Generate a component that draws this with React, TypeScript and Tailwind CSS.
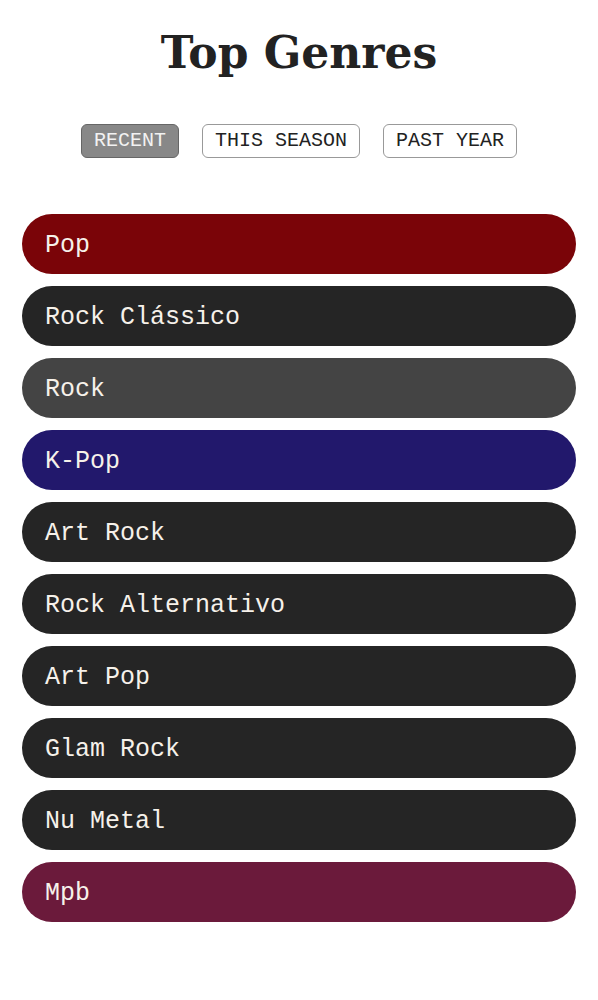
const genres = [
  { name: 'Pop', color: 'bg-[#7a0408]' },
  { name: 'Rock Clássico', color: 'bg-[#252525]' },
  { name: 'Rock', color: 'bg-[#444444]' },
  { name: 'K-Pop', color: 'bg-[#22186c]' },
  { name: 'Art Rock', color: 'bg-[#252525]' },
  { name: 'Rock Alternativo', color: 'bg-[#252525]' },
  { name: 'Art Pop', color: 'bg-[#252525]' },
  { name: 'Glam Rock', color: 'bg-[#252525]' },
  { name: 'Nu Metal', color: 'bg-[#252525]' },
  { name: 'Mpb', color: 'bg-[#6b1a3b]' },
]

const tabs = ['RECENT', 'THIS SEASON', 'PAST YEAR']

export default function App() {
  return (
    <div className="min-h-screen bg-white px-[22px] pt-[23px]">
      <h1 className="text-center text-[44px] leading-[60px] font-bold text-[#222] [font-family:'DejaVu_Serif',serif]">
        Top Genres
      </h1>

      <div className="mt-[41px] flex justify-center gap-[23px] [font-family:'Liberation_Mono',monospace]">
        {tabs.map((t, i) => (
          <button
            key={t}
            className={
              i === 0
                ? 'h-[34px] rounded-md border border-[#666] bg-[#888] px-3 text-[20px] text-[#f2f2f2]'
                : 'h-[34px] rounded-md border border-[#999] bg-white px-3 text-[20px] text-[#222]'
            }
          >
            {t}
          </button>
        ))}
      </div>

      {/* lista de generos */}
      <div className="mt-[56px] flex flex-col gap-3 [font-family:'Liberation_Mono',monospace]">
        {genres.map((g) => (
          <div
            key={g.name}
            className={`${g.color} flex h-[60px] items-center rounded-full px-[23px] pt-1 text-[25px] text-[#f6f1ea]`}
          >
            {g.name}
          </div>
        ))}
      </div>
    </div>
  )
}
